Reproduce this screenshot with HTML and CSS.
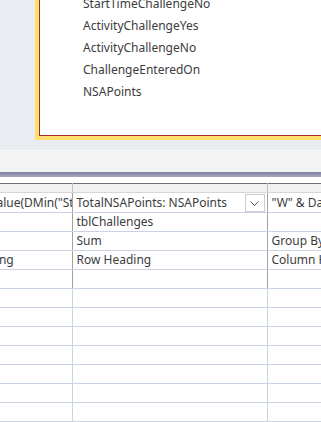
FILE: index.html
```html
<!DOCTYPE html>
<html lang="en">
<head>
  <meta charset="UTF-8" />
  <title>Query Design</title>
  <link rel="stylesheet" href="styles.css">
</head>
<body>
  <div class="canvas">
    <div class="table-box">
      <ul class="field-list">
        <li>StartTimeChallengeNo</li>
        <li>ActivityChallengeYes</li>
        <li>ActivityChallengeNo</li>
        <li>ChallengeEnteredOn</li>
        <li>NSAPoints</li>
      </ul>
    </div>
  </div>
  <div class="splitter"></div>
  <div class="split-bar"></div>
  <div class="grid-wrap">
    <table class="qbe">
      <colgroup>
        <col class="c1"><col class="c2"><col class="c3">
      </colgroup>
      <tr class="selector"><td></td><td></td><td></td></tr>
      <tr class="first">
        <td><div class="cell">Wk: DateValue(DMin("StartTime")</div></td>
        <td class="has-drop">
          <div class="cell">TotalNSAPoints: NSAPoints</div>
          <span class="drop">
            <svg width="9" height="5" viewBox="0 0 9 5"><polyline points="0.5,0.5 4.5,4.5 8.5,0.5" fill="none" stroke="#555" stroke-width="1"/></svg>
          </span>
        </td>
        <td><div class="cell">"W" &amp; DatePart("ww",[StartTime])</div></td>
      </tr>
      <tr><td><div class="cell"></div></td><td><div class="cell">tblChallenges</div></td><td><div class="cell"></div></td></tr>
      <tr><td><div class="cell">Group By</div></td><td><div class="cell">Sum</div></td><td><div class="cell">Group By</div></td></tr>
      <tr><td><div class="cell">Row Heading</div></td><td><div class="cell">Row Heading</div></td><td><div class="cell">Column Heading</div></td></tr>
      <tr><td></td><td></td><td></td></tr>
      <tr class="crit"><td></td><td></td><td></td></tr>
      <tr class="crit"><td></td><td></td><td></td></tr>
      <tr class="crit"><td></td><td></td><td></td></tr>
      <tr class="crit"><td></td><td></td><td></td></tr>
      <tr class="crit"><td></td><td></td><td></td></tr>
      <tr class="crit"><td></td><td></td><td></td></tr>
      <tr class="crit"><td></td><td></td><td></td></tr>
    </table>
  </div>
</body>
</html>
```
FILE: styles.css
```css
body {
  margin: 0;
  font-family: "Noto Sans", "Open Sans", sans-serif;
  font-size: 12px;
  color: #3c3c3c;
  background: #fff;
  overflow: hidden;
}
.canvas {
  height: 150px;
  background: #e9ecf0;
  border-bottom: 1px solid #fafafa;
  overflow: hidden;
}
.table-box {
  margin-left: 35px;
  width: 400px;
  border: 4px solid #fde06e;
  border-top: none;
}
.field-list {
  list-style: none;
  margin: -7px 0 0;
  padding: 0 0 32px 43px;
  background: #fff;
  border-left: 1px solid #a3282e;
  border-bottom: 1px solid #a3282e;
}
.field-list li {
  height: 22px;
  line-height: 22px;
}
.splitter {
  height: 21px;
  background: #f3f3f3;
}
.split-bar {
  height: 5px;
  background: linear-gradient(#7f7ea0, #a9a8c2);
}
.grid-wrap {
  padding-top: 6px;
  background: #fff;
}
.qbe {
  border-collapse: collapse;
  table-layout: fixed;
  margin-left: -65px;
  width: 462px;
  border-top: 1px solid #6f6f6f;
}
.c1 { width: 137px; }
.c2 { width: 195px; }
.c3 { width: 130px; }
.qbe td {
  padding: 0;
  height: 18px;
  border-bottom: 1px solid #c9d3e2;
  border-right: 1px solid #a2a2a2;
  vertical-align: middle;
  position: relative;
}
.qbe tr.crit td {
  border-right-color: #c9d3e2;
}
.qbe tr.selector td {
  height: 8px;
  background: #f1f1f1;
  border-bottom-color: #d6d6d6;
  border-right-color: #c4c4c4;
}
.qbe tr.first td {
  height: 19px;
}
.cell {
  padding: 0 4px;
  white-space: nowrap;
  overflow: hidden;
  line-height: 18px;
}
.drop {
  position: absolute;
  right: 2px;
  top: 1px;
  width: 18px;
  height: 16px;
  background: #fff;
  border: 1px solid #cdcdcd;
  display: flex;
  align-items: center;
  justify-content: center;
}
```
